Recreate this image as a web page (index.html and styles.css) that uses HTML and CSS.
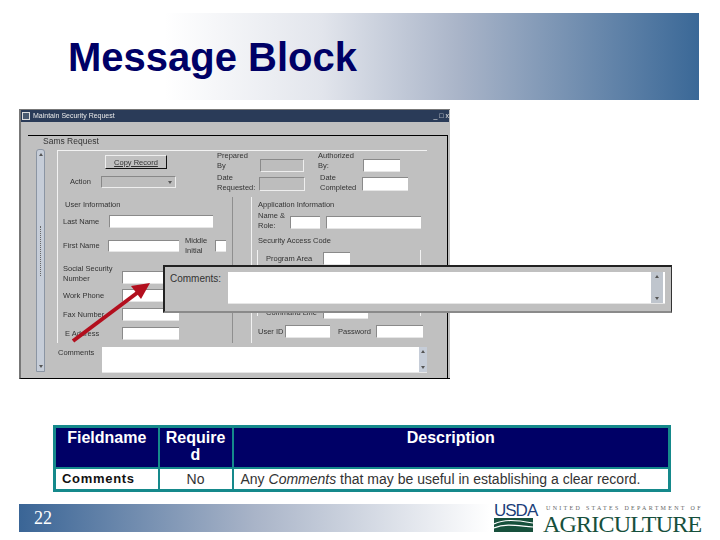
FILE: index.html
```html
<!DOCTYPE html>
<html lang="en">

<head>
  <meta charset="UTF-8" />
  <title>Message Block</title>
  <link rel="stylesheet" href="styles.css">
</head>

<body>
  <div class="slide">
    <div class="slide-head">
      <h1>Message Block</h1>
    </div>

    <div class="window">
      <div class="titlebar">
        <span class="app-icon"></span>
        <span class="title-text">Maintain Security Request</span>
        <span class="title-buttons">_ &#9633; x</span>
      </div>
      <div class="window-body">
        <div class="group-title">Sams Request</div>
        <div class="sheet">
          <div class="scrollbar">
            <span class="arrow-up"></span>
            <span class="scroll-dots"></span>
            <span class="arrow-down"></span>
          </div>
          <div class="sheet-main">
            <div class="top">
              <div class="col-action">
                <button class="copy-button">Copy Record</button>
                <div class="action-row">
                  <span class="lbl lbl-action">Action</span>
                  <div class="select"><span class="arrow-down"></span></div>
                </div>
              </div>
              <div class="col-requested">
                <div class="row-end row-first">
                  <span class="lbl lbl-req">Prepared<br>By</span>
                  <span class="input gray input-44"></span>
                </div>
                <div class="row-second">
                  <span class="lbl lbl-req">Date<br>Requested:</span>
                  <span class="input gray input-46"></span>
                </div>
              </div>
              <div class="col-auth">
                <div class="row-end row-first">
                  <span class="lbl lbl-auth">Authorized<br>By:</span>
                  <span class="input input-37"></span>
                </div>
                <div class="row-second">
                  <span class="lbl lbl-auth lbl-indent">Date<br>Completed</span>
                  <span class="input input-46"></span>
                </div>
              </div>
            </div>

            <div class="panels">
              <div class="user-panel">
                <div class="panel-title">User Information</div>
                <div class="row row-last">
                  <span class="lbl lbl-46">Last Name</span>
                  <span class="input input-104"></span>
                </div>
                <div class="row row-first-name">
                  <span class="lbl lbl-45">First Name</span>
                  <span class="input input-71"></span>
                  <span class="lbl lbl-middle">Middle<br>Initial</span>
                  <span class="input input-11"></span>
                </div>
                <div class="row row-ssn">
                  <span class="lbl lbl-59">Social Security<br>Number</span>
                  <span class="input input-57"></span>
                </div>
                <div class="row row-phone">
                  <span class="lbl lbl-59">Work Phone</span>
                  <span class="input input-57"></span>
                </div>
                <div class="row row-fax">
                  <span class="lbl lbl-59">Fax Number</span>
                  <span class="input input-57"></span>
                </div>
                <div class="row row-email">
                  <span class="lbl lbl-59 lbl-indent">E Address</span>
                  <span class="input input-57"></span>
                </div>
              </div>

              <div class="app-panel">
                <div class="panel-title">Application Information</div>
                <div class="row-end row-role">
                  <span class="lbl lbl-32">Name &amp;<br>Role:</span>
                  <span class="input input-30"></span>
                  <span class="input input-95"></span>
                </div>
                <div class="panel-title security">Security Access Code</div>
                <div class="access-box">
                  <div class="row">
                    <span class="lbl lbl-57">Program Area</span>
                    <span class="input input-27"></span>
                  </div>
                  <div class="row row-covered">
                    <span class="lbl lbl-57">Command Line</span>
                    <span class="input input-45"></span>
                  </div>
                </div>
                <div class="row row-login">
                  <span class="lbl lbl-27">User ID</span>
                  <span class="input input-45"></span>
                  <span class="lbl lbl-password">Password</span>
                  <span class="input input-47"></span>
                </div>
              </div>
            </div>

            <div class="comments-row">
              <span class="lbl lbl-comments">Comments</span>
              <div class="textarea">
                <div class="mini-scroll">
                  <span class="arrow-up"></span>
                  <span class="arrow-down"></span>
                </div>
              </div>
            </div>
          </div>
        </div>
      </div>
    </div>

    <div class="callout">
      <span class="callout-label">Comments:</span>
      <div class="callout-text">
        <div class="callout-scroll">
          <span class="arrow-up"></span>
          <span class="arrow-down"></span>
        </div>
      </div>
    </div>

    <svg class="pointer" width="90" height="70" viewBox="0 0 90 70">
      <path d="M2 60 L70 9" stroke="#b30f1e" stroke-width="4" fill="none" />
      <path d="M79 2 L60 5 L70 18 Z" fill="#b30f1e" />
    </svg>

    <table class="fields">
      <thead>
        <tr>
          <th class="col-name">Fieldname</th>
          <th class="col-req">Require<br>d</th>
          <th>Description</th>
        </tr>
      </thead>
      <tbody>
        <tr>
          <td class="field-name">Comments</td>
          <td class="field-req">No</td>
          <td class="field-desc">Any <em>Comments</em> that may be useful in establishing a clear record.</td>
        </tr>
      </tbody>
    </table>

    <div class="slide-foot">
      <div class="foot-band"><span class="page-num">22</span></div>
      <div class="logo">
        <div class="usda-mark">
          <span class="usda-text">USDA</span>
          <svg class="usda-field" width="39" height="14" viewBox="0 0 39 14">
            <rect width="39" height="14" fill="#17503c" />
            <path d="M0 6 C10 1 22 2 39 5 M0 10 C12 5 24 8 39 9" stroke="#fff" stroke-width="1.2" fill="none" />
          </svg>
        </div>
        <div class="usda-name">
          <span class="usda-dept">UNITED STATES DEPARTMENT OF</span>
          <span class="usda-agri">AGRICULTURE</span>
        </div>
      </div>
    </div>
  </div>
</body>

</html>
```

FILE: styles.css
```css
body {
  margin: 0;
  background: #fff;
  font-family: 'Liberation Sans', Arial, sans-serif;
  overflow: hidden;
}

.slide {
  position: relative;
  width: 720px;
  height: 540px;
  overflow: hidden;
}

/* title band */
.slide-head {
  margin: 13px 21px 0 14px;
  height: 87px;
  padding-left: 54px;
  box-sizing: border-box;
  background: linear-gradient(to right, #fff 0%, #fff 22%, #e2e5ec 45%, #a9b4c8 65%, #3a6897 100%);
}

h1 {
  margin: 0;
  padding-top: 21px;
  font-size: 40px;
  line-height: 46px;
  font-weight: bold;
  color: #000066;
}

/* screenshot of the form */
.window {
  width: 431px;
  height: 270px;
  margin: 9px 0 0 19px;
  box-sizing: border-box;
  background: #c0c0c0;
  border-top: 1px solid #777;
  border-left: 2px solid #777;
  border-bottom: 1px solid #000;
  font-size: 7.5px;
  color: #333;
  filter: blur(0.35px);
}

.titlebar {
  height: 12px;
  width: 428px;
  display: flex;
  align-items: center;
  gap: 3px;
  padding-left: 1px;
  box-sizing: border-box;
  font-size: 7px;
  color: #e8e8e8;
  line-height: 12px;
  background-color: #2a3b58;
  background-image: radial-gradient(#8d97a8 0.6px, transparent 0.7px);
  background-size: 4px 4px;
}

.app-icon {
  width: 8px;
  height: 8px;
  background: #4a5a70;
  border: 1px solid #ddd;
  box-sizing: border-box;
}

.title-text {
  background: #2a3b58;
  padding-right: 3px;
}

.title-buttons {
  margin-left: auto;
  background: #2a3b58;
}

.window-body {
  width: 420px;
  height: 243px;
  margin: 13px 0 0 7px;
  padding-left: 8px;
  box-sizing: border-box;
  border-top: 1px solid #000;
  border-right: 1px solid #000;
}

.group-title {
  margin-left: 7px;
  height: 13px;
  line-height: 11px;
  font-size: 8.5px;
}

.sheet {
  display: flex;
}

.scrollbar {
  position: relative;
  width: 9px;
  height: 223px;
  margin-right: 12px;
  background: #c6cdd8;
  border: 1px solid #8b95a3;
  box-sizing: border-box;
  border-radius: 3px 3px 0 0;
}

.scroll-dots {
  position: absolute;
  left: 3px;
  top: 76px;
  height: 50px;
  border-left: 1px dotted #666;
}

.arrow-up,
.arrow-down {
  position: absolute;
  left: 50%;
  margin-left: -2px;
  border-left: 2px solid transparent;
  border-right: 2px solid transparent;
}

.arrow-up {
  top: 3px;
  border-bottom: 3px solid #555;
}

.arrow-down {
  bottom: 3px;
  border-top: 3px solid #555;
}

.sheet-main {
  width: 370px;
  margin-top: 1px;
  border-top: 1px solid #f2f2f2;
}

.lbl {
  flex: none;
  line-height: 10px;
  white-space: nowrap;
  overflow: hidden;
}

.input {
  flex: none;
  display: block;
  box-sizing: border-box;
  background: #fff;
  border-top: 1px solid #8a8a8a;
  border-left: 1px solid #8a8a8a;
  border-bottom: 1px solid #e6e6e6;
  height: 13px;
}

.input.gray {
  background: #bdbdbd;
  border-right: 1px solid #eee;
  border-bottom-color: #eee;
}

.input-11 { width: 11px; height: 12px; }
.input-27 { width: 27px; }
.input-30 { width: 30px; }
.input-37 { width: 37px; }
.input-44 { width: 44px; }
.input-45 { width: 45px; }
.input-46 { width: 46px; height: 14px; margin-left: -1px; }
.input-47 { width: 47px; }
.input-57 { width: 57px; }
.input-71 { width: 71px; height: 12px; }
.input-95 { width: 95px; margin-left: 6px; }
.input-104 { width: 104px; }

.top {
  display: flex;
  height: 46px;
  border-left: 1px solid #f2f2f2;
}

.col-action {
  width: 159px;
}

.copy-button {
  display: block;
  width: 62px;
  height: 14px;
  margin: 4px 0 0 47px;
  padding: 0;
  font: 7.5px 'Liberation Sans', Arial, sans-serif;
  color: #333;
  text-decoration: underline;
  background: #c0c0c0;
  border: 1px solid #111;
  border-top-color: #eee;
  border-left-color: #eee;
}

.action-row {
  display: flex;
  align-items: center;
  margin: 7px 0 0 12px;
}

.lbl-action {
  width: 31px;
}

.select {
  position: relative;
  width: 75px;
  height: 12px;
  box-sizing: border-box;
  background: #bdbdbd;
  border: 1px solid #888;
  border-right-color: #eee;
  border-bottom-color: #eee;
}

.select .arrow-down {
  left: auto;
  right: 3px;
}

.col-requested {
  width: 101px;
}

.row-end {
  display: flex;
  align-items: flex-end;
}

.row-first {
  height: 21px;
}

.row-first .lbl {
  padding-bottom: 1px;
}

.row-second {
  display: flex;
  align-items: center;
  margin-top: 1px;
}

.row-second .lbl {
  padding-bottom: 2px;
}

.lbl-req {
  width: 43px;
}

.lbl-auth {
  width: 45px;
}

.lbl-indent {
  padding-left: 2px;
  box-sizing: border-box;
}

.panels {
  display: flex;
  height: 146px;
}

.user-panel {
  width: 176px;
  padding-left: 5px;
  box-sizing: border-box;
  border-left: 1px solid #f2f2f2;
  border-right: 1px solid #8f8f8f;
}

.user-panel > .panel-title {
  padding-left: 2px;
}

.panel-title {
  height: 12px;
  margin-top: 3px;
  line-height: 10px;
}

.row {
  display: flex;
  align-items: center;
}

.lbl-45 { width: 45px; }
.lbl-46 { width: 46px; }
.lbl-59 { width: 59px; }
.lbl-32 { width: 32px; }
.lbl-57 { width: 57px; }
.lbl-27 { width: 27px; }

.row-last { margin-top: 3px; }
.row-first-name { margin-top: 8px; }
.row-ssn { margin-top: 8px; align-items: flex-end; }
.row-phone { margin-top: 5px; }
.row-fax { margin-top: 6px; }
.row-email { margin-top: 6px; }

.lbl-middle {
  width: 30px;
  margin-left: 6px;
}

.app-panel {
  width: 174px;
  margin-left: 18px;
  padding-left: 6px;
  box-sizing: border-box;
  border-left: 1px solid #f2f2f2;
}

.row-role {
  margin-top: -1px;
}

.row-role .input {
  margin-bottom: 2px;
}

.panel-title.security {
  margin-top: 5px;
}

.access-box {
  width: 164px;
  height: 66px;
  margin: 2px 0 0 -1px;
  padding: 2px 0 0 8px;
  box-sizing: border-box;
  border-left: 1px solid #f2f2f2;
  border-right: 1px solid #f2f2f2;
}

.row-covered {
  margin-top: 41px;
}

.row-login {
  margin-top: 9px;
}

.lbl-password {
  width: 38px;
  margin-left: 8px;
}

.comments-row {
  display: flex;
  margin-top: 4px;
  padding-left: 1px;
}

.lbl-comments {
  width: 44px;
  padding-top: 1px;
}

.textarea {
  display: flex;
  justify-content: flex-end;
  width: 325px;
  height: 26px;
  box-sizing: border-box;
  background: #fff;
  border-bottom: 1px solid #e6e6e6;
}

.mini-scroll {
  position: relative;
  width: 8px;
  background: #c6cdd8;
}

/* enlarged comments field over the form */
.callout {
  position: absolute;
  left: 163px;
  top: 265px;
  width: 509px;
  height: 48px;
  box-sizing: border-box;
  display: flex;
  padding: 5px 6px 7px 5px;
  background: #c0c0c0;
  border-top: 2px solid #222;
  border-left: 2px solid #222;
  border-right: 1px solid #333;
  border-bottom: 2px solid #8a8a8a;
}

.callout-label {
  width: 58px;
  padding-top: 1px;
  font-size: 10px;
  line-height: 12px;
  color: #333;
}

.callout-text {
  flex: 1;
  display: flex;
  justify-content: flex-end;
  padding-right: 2px;
  background: #fff;
  border-bottom: 1px solid #e6e6e6;
}

.callout-scroll {
  position: relative;
  width: 12px;
  background: #bfc5cd;
}

.pointer {
  position: absolute;
  left: 71px;
  top: 281px;
}

/* field table */
.fields {
  width: 618px;
  margin: 46px 0 0 53px;
  border-collapse: collapse;
  table-layout: fixed;
  border: 3px solid #15898b;
}

.fields th,
.fields td {
  border: 2px solid #15898b;
  padding: 0;
}

.fields th {
  height: 41px;
  vertical-align: top;
  background: #000066;
  color: #fff;
  font-size: 16px;
  line-height: 17px;
  font-weight: bold;
  padding-top: 1px;
  box-sizing: border-box;
}

.col-name {
  width: 104px;
}

.col-req {
  width: 74px;
}

.fields td {
  height: 20px;
  font-size: 14px;
  color: #333;
  text-align: center;
}

.fields .field-name {
  padding-left: 6px;
  font-size: 13px;
  font-weight: bold;
  letter-spacing: 0.7px;
  color: #111;
  text-align: left;
}

.fields .field-desc {
  text-align: left;
  padding-left: 7px;
}

/* footer */
.slide-foot {
  display: flex;
  height: 36px;
  margin-top: 12px;
}

.foot-band {
  width: 471px;
  height: 28px;
  margin-left: 19px;
  padding-left: 15px;
  box-sizing: border-box;
  background: linear-gradient(to right, #3a6596 0%, #a9b4c8 50%, #fff 100%);
}

.page-num {
  font-family: 'Liberation Serif', 'Times New Roman', serif;
  font-size: 18px;
  line-height: 28px;
  color: #fff;
}

.logo {
  display: flex;
  margin-left: 4px;
}

.usda-mark {
  display: flex;
  flex-direction: column;
  width: 39px;
}

.usda-text {
  font-size: 17px;
  line-height: 13px;
  letter-spacing: -1px;
  color: #1c3f7a;
  height: 14px;
}

.usda-field {
  display: block;
}

.usda-name {
  display: flex;
  flex-direction: column;
  margin-left: 10px;
}

.usda-dept {
  padding-left: 3px;
  font-family: 'Liberation Serif', 'Times New Roman', serif;
  font-size: 6px;
  line-height: 8px;
  letter-spacing: 2.3px;
  color: #666;
  white-space: nowrap;
}

.usda-agri {
  margin-top: 2px;
  font-family: 'Liberation Serif', 'Times New Roman', serif;
  font-size: 24px;
  line-height: 20px;
  letter-spacing: -0.8px;
  color: #17503c;
  white-space: nowrap;
}
```
